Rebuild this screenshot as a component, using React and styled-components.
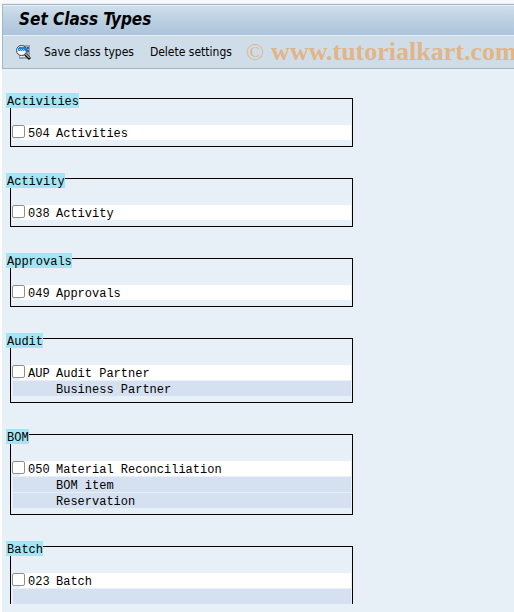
import React, { useState } from 'react';
import styled, { createGlobalStyle } from 'styled-components';

const colors = {
    page: '#e8f0f7',
    toolbar: '#cfdde8',
    edge: '#a3b5cc',
    legend: '#a4e5f3',
    subRow: '#d5e0f0',
    watermark: '#e2b588',
};

const GlobalStyle = createGlobalStyle`
    * {
        box-sizing: border-box;
    }

    body {
        margin: 0;
        background: ${colors.page};
        color: #000;
    }
`
const Page = styled.div`
    min-height: 100vh;
    border-top: 3px solid #f7f9fc;
    border-left: 2px solid #fdfdfe;
    overflow: hidden;
`
const Header = styled.header`
    margin-top: 1px;
    border: 1px solid ${colors.edge};
    border-right: 0;
    font-family: "DejaVu Sans Condensed", Tahoma, "DejaVu Sans", sans-serif;
`
const Title = styled.h1`
    margin: 0;
    height: 31px;
    padding-left: 16px;
    border-top: 1px solid #e6f0f7;
    border-bottom: 1px solid #e6f0f7;
    background: linear-gradient(#cfe0ec, #bfd2e1 40%, #adc4de);
    font-size: 17px;
    line-height: 26px;
    font-style: italic;
    font-weight: bold;
`
const Toolbar = styled.div`
    display: flex;
    align-items: center;
    height: 32px;
    padding-left: 12px;
    background: ${colors.toolbar};
    white-space: nowrap;
`
const ToolButton = styled.button`
    flex: none;
    display: flex;
    margin-right: ${({ $gap }) => $gap}px;
    padding: 0;
    border: 0;
    background: none;
    color: #000;
    font-family: inherit;
    font-size: 12px;
    line-height: 16px;
    cursor: pointer;
`
const Watermark = styled.span`
    color: ${colors.watermark};
    font-family: "Liberation Serif", "Times New Roman", serif;
    font-size: 26px;
    line-height: 32px;
    font-weight: bold;
`
const Copyright = styled.span`
    margin-right: 7px;
    font-size: 24px;
    font-weight: normal;
`
const Groups = styled.main`
    display: flex;
    flex-direction: column;
    gap: 31px;
    padding: 29px 8px 8px;
    font-family: "Liberation Mono", "Courier New", monospace;
    font-size: 12px;
    line-height: 19px;
`
const Group = styled.fieldset`
    width: 100%;
    max-width: 343px;
    min-width: 0;
    margin: 0;
    padding: 0 0 ${({ $open }) => $open ? 0 : 6}px 2px;
    border: 1px solid #000;
    border-bottom-width: ${({ $open }) => $open ? 0 : 1}px;
`
const Legend = styled.legend`
    float: left;
    height: 15px;
    margin: -6px 0 0 -7px;
    padding: 0 0 0 1px;
    background: ${colors.legend};
`
const Rows = styled.div`
    clear: both;
    display: flex;
    flex-direction: column;
    gap: 1px;
    padding: 17px 1px 0 0;
`
const Row = styled.div`
    display: flex;
    height: 15px;
    background: linear-gradient(to right, ${colors.page} 7px, #fff 7px);
`
const SubRow = styled.div`
    height: 15px;
    padding-left: 43px;
    background: ${colors.subRow};
`
const Checkbox = styled.input`
    appearance: none;
    flex: none;
    width: 13px;
    height: 13px;
    margin: 0 3px 0 -1px;
    border: 1px solid #8e8f8f;
    border-radius: 2px;
    background: #fff;

    &:checked {
        background: #5b7fae;
    }
`
const RowLabel = styled.label`
    display: flex;
    gap: 7px;
    white-space: nowrap;
`
const Code = styled.span`
    width: 21px;
`

const groups = [
    { title: 'Activities', code: '504', name: 'Activities', items: [] },
    { title: 'Activity', code: '038', name: 'Activity', items: [] },
    { title: 'Approvals', code: '049', name: 'Approvals', items: [] },
    { title: 'Audit', code: 'AUP', name: 'Audit Partner', items: ['Business Partner'] },
    { title: 'BOM', code: '050', name: 'Material Reconciliation', items: ['BOM item', 'Reservation'] },
    { title: 'Batch', code: '023', name: 'Batch', items: [''], open: true },
];

const DisplayIcon = () => (
    <svg width="17" height="17" viewBox="0 0 17 17" aria-hidden="true">
        <path d="M4 1h11v14H4z" fill="#93a1b2" />
        <path d="M12 3h2v2h-2zM12 6h2v2h-2z" fill="#2467b5" />
        <path d="M5 12h5v1H5z" fill="#e3ebf4" />
        <path d="M10.500 10.500l4.500 4.500" stroke="#111" strokeWidth="3" />
        <path d="M10.500 10l4 4" stroke="#fff" strokeWidth="1" />
        <circle cx="6.500" cy="6.500" r="5" fill="#f4f9fd" stroke="#3a4652" strokeWidth="1" />
        <path d="M4 3h6v1h1v3H3V4h1z" fill="#1f7fdc" />
        <path d="M4 5h1v1H4zM6 5h1v1H6zM8 5h1v1H8zM5 6h1v1H5zM7 6h1v1H7zM9 6h1v1H9z" fill="#8fd0f6" />
    </svg>
)

const ClassTypeGroup = ({ title, code, name, items, open }) => {
    const [checked, setChecked] = useState(false);
    const id = `type-${code}`;

    return (
        <Group $open={open}>
            <Legend>{title}</Legend>
            <Rows>
                <Row>
                    <Checkbox
                        id={id}
                        type="checkbox"
                        checked={checked}
                        onChange={(e) => setChecked(e.target.checked)}
                    />
                    <RowLabel htmlFor={id}>
                        <Code>{code}</Code>
                        <span>{name}</span>
                    </RowLabel>
                </Row>
                {items.map((item, index) => <SubRow key={index}>{item}</SubRow>)}
            </Rows>
        </Group>
    );
}

const App = () => {
    return (
        <>
        <GlobalStyle />
        <Page>
            <Header>
                <Title>Set Class Types</Title>
                <Toolbar>
                    <ToolButton type="button" aria-label="Display" $gap={12}>
                        <DisplayIcon />
                    </ToolButton>
                    <ToolButton type="button" $gap={16}>Save class types</ToolButton>
                    <ToolButton type="button" $gap={14}>Delete settings</ToolButton>
                    <Watermark><Copyright>©</Copyright>www.tutorialkart.com</Watermark>
                </Toolbar>
            </Header>
            <Groups>
                {groups.map((group) => <ClassTypeGroup key={group.code} {...group} />)}
            </Groups>
        </Page>
        </>
    );
}

export default App;
